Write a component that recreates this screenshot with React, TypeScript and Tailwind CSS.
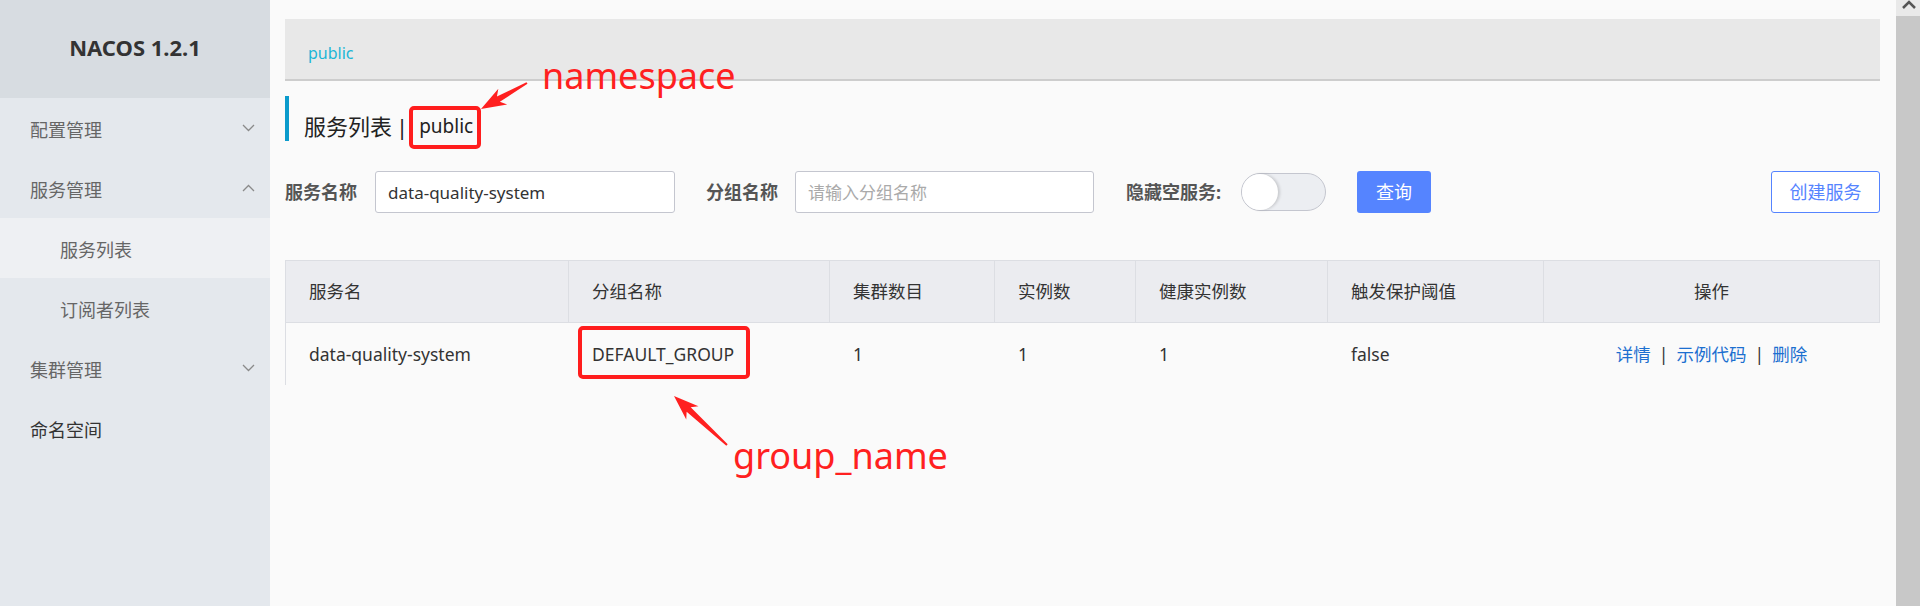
const cols = [
  { title: "服务名", value: "data-quality-system" },
  { title: "分组名称", value: "DEFAULT_GROUP" },
  { title: "集群数目", value: "1" },
  { title: "实例数", value: "1" },
  { title: "健康实例数", value: "1" },
  { title: "触发保护阈值", value: "false" },
];

const arrow = (tx: number, ty: number, hx: number, hy: number) => {
  const len = Math.hypot(hx - tx, hy - ty);
  const ux = (hx - tx) / len;
  const uy = (hy - ty) / len;
  const nx = -uy;
  const ny = ux;
  const bx = hx - ux * 20;
  const by = hy - uy * 20;
  const pts = [
    [tx + nx * 1, ty + ny * 1],
    [bx + nx * 3, by + ny * 3],
    [bx - ux * 5 + nx * 9, by - uy * 5 + ny * 9],
    [hx, hy],
    [bx - ux * 5 - nx * 9, by - uy * 5 - ny * 9],
    [bx - nx * 3, by - ny * 3],
    [tx - nx * 1, ty - ny * 1],
  ];
  return pts.map((p) => p.join(",")).join(" ");
};

const Chevron = ({ up }: { up?: boolean }) => (
  <svg width="13" height="8" viewBox="0 0 13 8">
    <path
      d={up ? "M1 7 L6.5 1.5 L12 7" : "M1 1 L6.5 6.5 L12 1"}
      fill="none"
      stroke="#8a8a8a"
      strokeWidth="1.3"
    />
  </svg>
);

const MenuItem = ({
  label,
  sub,
  active,
  open,
  dark,
}: {
  label: string;
  sub?: boolean;
  active?: boolean;
  open?: boolean;
  dark?: boolean;
}) => (
  <div
    className={`h-[60px] flex items-center justify-between pr-[15px] text-[18px] ${
      sub ? "pl-[60px]" : "pl-[30px]"
    } ${active ? "bg-[#eef0f3]" : ""} ${dark ? "text-[#333]" : "text-[#666]"}`}
  >
    <span className="pt-[4px]">{label}</span>
    {open === true && <Chevron up />}
    {open === false && <Chevron />}
  </div>
);

export default function App() {
  return (
    <div className="relative flex w-[1920px] h-[606px] overflow-hidden font-['Noto_Sans','Noto_Sans_CJK_SC',sans-serif]">
      {/* sidebar */}
      <aside className="w-[270px] shrink-0 bg-[#e4e8ed] flex flex-col">
        <div className="h-[98px] bg-[#d7dce1] flex items-center justify-center pb-[4px] text-[22px] font-bold text-[#333]">
          NACOS 1.2.1
        </div>
        <MenuItem label="配置管理" open={false} />
        <MenuItem label="服务管理" open={true} />
        <MenuItem label="服务列表" sub active />
        <MenuItem label="订阅者列表" sub />
        <MenuItem label="集群管理" open={false} />
        <MenuItem label="命名空间" dark />
      </aside>

      {/* main */}
      <main className="flex-1 bg-[#fafafa] pl-[15px] pr-[16px]">
        <div className="mt-[19px] h-[62px] bg-[#e8e8e8] border-b-2 border-[#cdcdcd] pl-[23px] pt-[22px] text-[16px] leading-[24px] text-[#1cb6d6]">
          public
        </div>

        <div className="mt-[15px] h-[45px] border-l-4 border-[#0b9bcc] flex items-end pl-[15px] leading-[30px] text-[#222]">
          <span className="text-[22px]">服务列表</span>
          <span className="ml-[4px] text-[22px]">|</span>
          <span className="ml-[11px] text-[19px]">public</span>
        </div>

        <div className="mt-[30px] h-[42px] flex items-center text-[18px]">
          <span className="font-bold text-[#555]">服务名称</span>
          <input
            readOnly
            defaultValue="data-quality-system"
            className="ml-[18px] w-[300px] h-[42px] rounded-[3px] border border-[#c4c6cf] bg-white pl-[12px] text-[17px] text-[#333] outline-none"
          />
          <span className="ml-[31px] font-bold text-[#555]">分组名称</span>
          <input
            readOnly
            placeholder="请输入分组名称"
            className="ml-[17px] w-[299px] h-[42px] rounded-[3px] border border-[#c4c6cf] bg-white pl-[12px] text-[17px] text-[#333] placeholder:text-[#aaa] outline-none"
          />
          <span className="ml-[32px] font-bold text-[#555]">隐藏空服务:</span>
          <div className="ml-[20px] w-[85px] h-[38px] rounded-full border border-[#c4c6cf] bg-[#eceef2] flex items-center">
            <div className="w-[36px] h-[36px] rounded-full bg-white shadow-[2px_0_3px_rgba(0,0,0,0.15)]" />
          </div>
          <button className="ml-[31px] w-[74px] h-[42px] rounded-[3px] bg-[#5584ff] text-white">
            查询
          </button>
          <button className="ml-auto w-[109px] h-[42px] rounded-[3px] border border-[#5584ff] bg-white text-[#5584ff]">
            创建服务
          </button>
        </div>

        {/* table */}
        <div className="mt-[47px] text-[17.5px] text-[#333]">
          <div className="grid grid-cols-[283px_261px_165px_141px_192px_216px_335px] h-[63px] bg-[#ebecf0] border border-[#dcdee3]">
            {cols.map((c) => (
              <div key={c.title} className="border-r border-[#dcdee3] flex items-center pl-[23px]">
                {c.title}
              </div>
            ))}
            <div className="flex items-center justify-center">操作</div>
          </div>
          <div className="grid grid-cols-[283px_261px_165px_141px_192px_216px_335px] h-[62px] border-l border-[#dcdee3]">
            {cols.map((c) => (
              <div key={c.title} className="flex items-center pl-[23px]">
                {c.value}
              </div>
            ))}
            <div className="flex items-center justify-center">
              <span className="text-[#1c6fd0]">详情</span>
              <span className="mx-[8px]">|</span>
              <span className="text-[#1c6fd0]">示例代码</span>
              <span className="mx-[8px]">|</span>
              <span className="text-[#1c6fd0]">删除</span>
            </div>
          </div>
        </div>
      </main>

      {/* scrollbar */}
      <div className="w-[26px] shrink-0 bg-[#c8c8c8] flex flex-col">
        <div className="h-[16px] bg-[#e9e9e9] flex justify-center">
          <svg width="14" height="9" viewBox="0 0 14 9">
            <path d="M1 8 L7 2 L13 8" fill="none" stroke="#555" strokeWidth="2.5" />
          </svg>
        </div>
      </div>

      {/* annotations */}
      <div className="absolute inset-0 pointer-events-none">
        <div className="absolute left-[409px] top-[106px] w-[72px] h-[43px] border-4 border-[#ff1d1d] rounded-[5px]" />
        <div className="absolute left-[578px] top-[326px] w-[172px] h-[53px] border-4 border-[#ff1d1d] rounded-[5px]" />
        <div className="absolute left-[542px] top-[58px] text-[36px] leading-none text-[#ff2020]">namespace</div>
        <div className="absolute left-[733px] top-[438px] text-[36px] leading-none text-[#ff2020]">group_name</div>
        <svg className="absolute inset-0" width="1920" height="606">
          <polygon points={arrow(527, 83, 481, 109)} fill="#ff2020" />
          <polygon points={arrow(727, 445, 674, 396)} fill="#ff2020" />
        </svg>
      </div>
    </div>
  );
}
